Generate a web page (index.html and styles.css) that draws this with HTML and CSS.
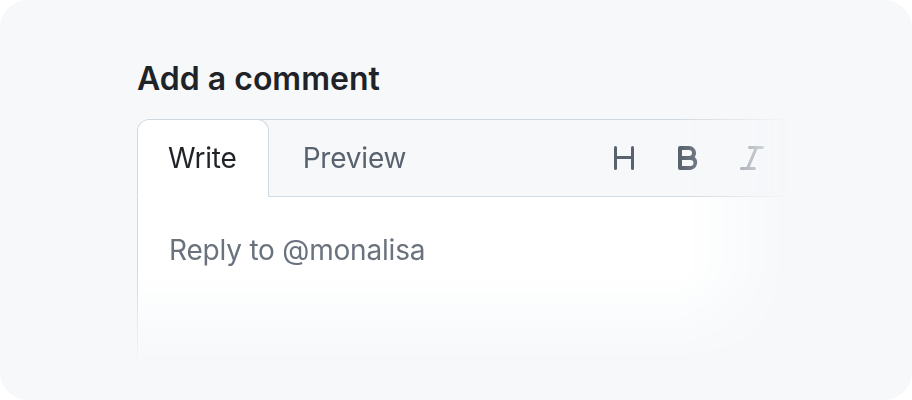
FILE: index.html
```html
<!DOCTYPE html>
<html lang="en">
<head>
<meta charset="utf-8">
<title>Add a comment</title>
<link rel="stylesheet" href="styles.css">
</head>
<body>
<div class="card">
  <h2 class="title">Add a comment</h2>
  <div class="editor">
    <div class="editor-header">
      <div class="tab tab-active">Write</div>
      <div class="tab">Preview</div>
      <div class="toolbar">
        <span class="tool">
          <svg viewBox="0 0 16 16" width="32" height="32"><path d="M3.75 2a.75.75 0 0 1 .75.75V7h7V2.750a.75.75 0 0 1 1.5 0v10.5a.75.75 0 0 1-1.5 0V8.5h-7v4.75a.75.75 0 0 1-1.5 0V2.75A.75.75 0 0 1 3.75 2Z"/></svg>
        </span>
        <span class="tool">
          <svg viewBox="0 0 16 16" width="32" height="32"><path d="M4 2h4.5a3.5 3.5 0 0 1 2.852 5.53A3.75 3.75 0 0 1 9.25 14H4a1 1 0 0 1-1-1V3a1 1 0 0 1 1-1Zm1 7v3h4.25a1.5 1.5 0 0 0 0-3Zm3.5-2a1.5 1.5 0 0 0 0-3H5v3Z"/></svg>
        </span>
        <span class="tool">
          <svg viewBox="0 0 16 16" width="32" height="32"><path d="M6 2.75A.75.75 0 0 1 6.75 2h6.5a.75.75 0 0 1 0 1.5h-2.505l-3.858 9H9.25a.75.75 0 0 1 0 1.5h-6.5a.75.75 0 0 1 0-1.5h2.505l3.858-9H6.75A.75.75 0 0 1 6 2.75Z"/></svg>
        </span>
      </div>
    </div>
    <div class="editor-body">
      <div class="placeholder">Reply to @monalisa</div>
    </div>
  </div>
</div>
</body>
</html>
```

FILE: styles.css
```css
* { box-sizing: border-box; }

html, body {
  margin: 0;
  padding: 0;
  background: #ffffff;
}

body {
  font-family: Inter, "Noto Sans", "Liberation Sans", sans-serif;
  width: 912px;
  height: 400px;
  overflow: hidden;
}

.card {
  width: 912px;
  height: 400px;
  border-radius: 28px;
  background: #f6f8fa;
  overflow: hidden;
  padding: 59px 0 0 137px;
}

.title {
  margin: 0 0 20px 0;
  font-size: 32px;
  line-height: 40px;
  font-weight: 600;
  color: #1f2328;
}

.editor {
  width: 720px;
  height: 290px;
  border: 1px solid #d1d9e0;
  border-radius: 12px 0 0 0;
  background: #ffffff;
  -webkit-mask-image: linear-gradient(to right, #000 543px, transparent 655px), linear-gradient(to bottom, #000 150px, transparent 248px);
  -webkit-mask-composite: source-in;
  mask-image: linear-gradient(to right, #000 543px, transparent 655px), linear-gradient(to bottom, #000 150px, transparent 248px);
  mask-composite: intersect;
}

.editor-header {
  display: flex;
  align-items: stretch;
  height: 77px;
  background: #f6f8fa;
  border-bottom: 1px solid #d1d9e0;
  border-radius: 11px 0 0 0;
}

.tab {
  display: flex;
  align-items: center;
  padding: 0 32px 0 33px;
  font-size: 28px;
  letter-spacing: -0.2px;
  color: #59636e;
  border: 1px solid transparent;
  margin: -1px 0 -1px 0;
}

.tab-active {
  margin-left: -1px;
  background: #ffffff;
  color: #1f2328;
  border-color: #d1d9e0;
  border-bottom-color: #ffffff;
  border-radius: 12px 12px 0 0;
  padding: 0 31px 0 30px;
}

.toolbar {
  display: flex;
  align-items: center;
  gap: 32px;
  margin-left: auto;
  padding-right: 88px;
}

.tool {
  display: flex;
  width: 32px;
  height: 32px;
  fill: #59636e;
}

.tool svg { display: block; }

.editor-body {
  padding: 33px 31px;
}

.placeholder {
  font-size: 28px;
  line-height: 40px;
  letter-spacing: -0.2px;
  color: #6a737d;
}
```
